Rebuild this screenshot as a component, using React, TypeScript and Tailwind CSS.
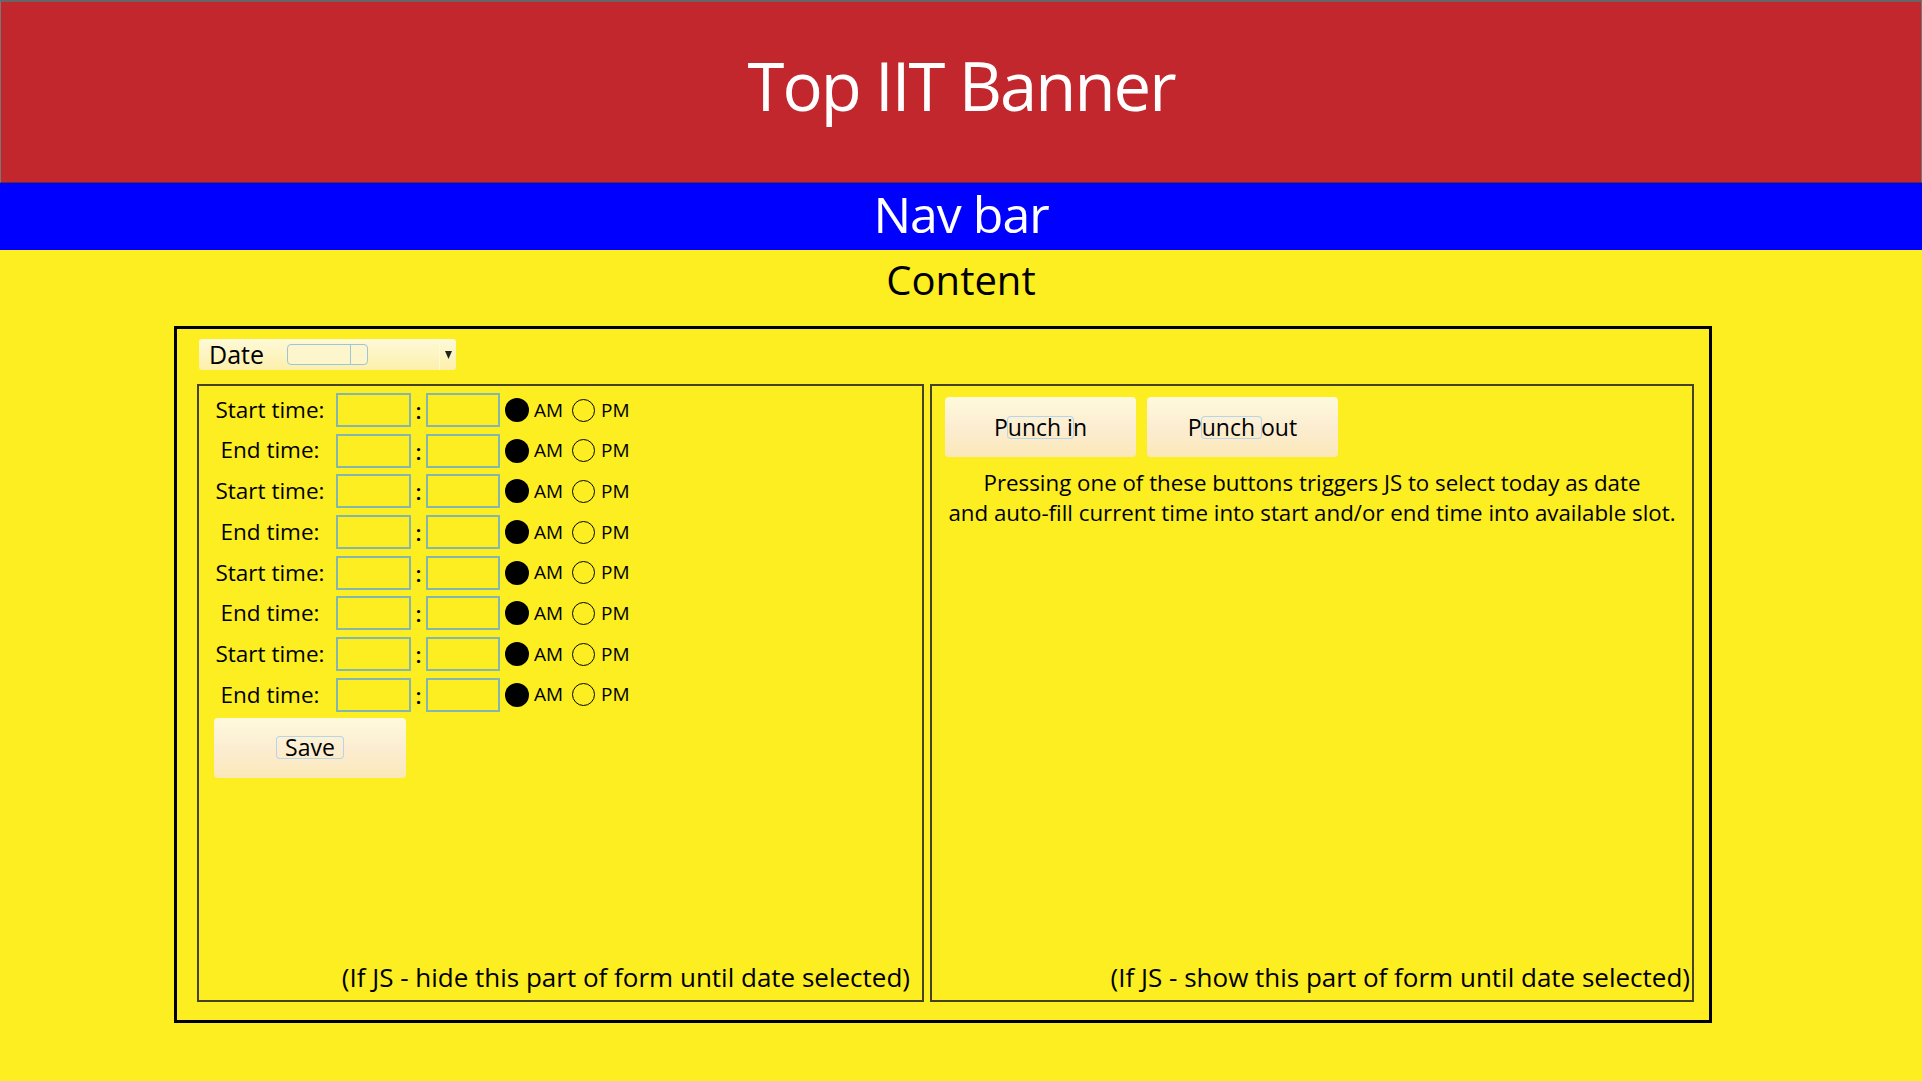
import React from 'react';

const rows = ['Start time:', 'End time:', 'Start time:', 'End time:', 'Start time:', 'End time:', 'Start time:', 'End time:'];

function TimeRow({ label }: { label: string }) {
  return (
    <div className="flex h-[34px] items-center pl-[12px]">
      <span className="w-[118px] text-center text-[22.5px] leading-none">{label}</span>
      <div className="ml-[7px] h-[34px] w-[75px] border-2 border-[#84b6b0]" />
      <span className="w-[15px] text-center text-[22px] font-semibold leading-none">:</span>
      <div className="h-[34px] w-[74px] border-2 border-[#84b6b0]" />
      <span className="ml-[5px] h-[24px] w-[24px] rounded-full bg-black" />
      <span className="ml-[5px] text-[19px] leading-none">AM</span>
      <span className="ml-[9px] h-[23px] w-[23px] rounded-full border-[1.5px] border-black" />
      <span className="ml-[6px] text-[19px] leading-none">PM</span>
    </div>
  );
}

function CreamButton({ children, className }: { children: React.ReactNode; className?: string }) {
  return (
    <div
      className={
        'flex h-[60px] w-[191px] items-center justify-center rounded-[4px] bg-linear-to-b from-[#fefadb] via-[#fcedd2] to-[#fbe8b8] text-[23px] ' +
        (className ?? '')
      }
    >
      {children}
    </div>
  );
}

function Focus({ children }: { children: React.ReactNode }) {
  return <span className="inline-block rounded-[3px] leading-[21px] ring-1 ring-[#b7d5e8]">{children}</span>;
}

export default function App() {
  return (
    <div className="min-h-screen w-full bg-[#fcee21] font-['Open_Sans',sans-serif] text-black">
      {/* Banner */}
      <div className="flex h-[183px] justify-center border-t-2 border-r border-l border-b border-t-[#666] border-r-[#777] border-l-[#777] border-b-[#5c2a3a] bg-[#c1272d] pt-[50px]">
        <h1 className="text-[67px] leading-none tracking-[-2px] text-white">Top IIT Banner</h1>
      </div>

      {/* Nav */}
      <div className="flex h-[67px] justify-center bg-[#0000ff] pt-[6px]">
        <span className="text-[50px] leading-none tracking-[-1px] text-white">Nav bar</span>
      </div>

      {/* Content */}
      <div className="flex flex-col pt-[10px]">
        <h2 className="text-center text-[40px] leading-none">Content</h2>

        <div className="mt-[26px] ml-[174px] flex h-[697px] w-[1538px] flex-col border-[3px] border-black pt-[10px] pb-[18px] pl-[20px]">
          {/* Date select */}
          <div className="ml-[2px] flex h-[31px] w-[257px] items-center rounded-[3px] bg-linear-to-b from-[#fef9d8] to-[#fcf0aa]">
            <span className="ml-[10px] w-[78px] text-[25px] leading-none">Date</span>
            <div className="flex h-[21px] w-[81px] rounded-[4px] border border-[#9cc5dc] bg-[#fdf5cc]">
              <div className="w-[63px] border-r border-[#9cc5dc]" />
            </div>
            <div className="ml-auto flex h-full w-[17px] items-center justify-center border-l border-[#fff9d6]">
              <svg width="7" height="8" viewBox="0 0 7 8">
                <path d="M0 0H7L3.5 8Z" fill="#222" />
              </svg>
            </div>
          </div>

          <div className="mt-[14px] flex flex-1 gap-[6px]">
            {/* Left panel */}
            <div className="flex w-[727px] flex-col border-2 border-[#46422a] pt-[7px] pb-[10px]">
              <div className="flex flex-col gap-[6.7px]">
                {rows.map((r, i) => (
                  <TimeRow key={i} label={r} />
                ))}
              </div>
              <CreamButton className="mt-[6px] ml-[15px] w-[192px]">
                <Focus>
                  <span className="px-[8px]">Save</span>
                </Focus>
              </CreamButton>
              <p className="mt-auto pr-[12px] text-right text-[26px] leading-none">
                (If JS - hide this part of form until date selected)
              </p>
            </div>

            {/* Right panel */}
            <div className="flex w-[764px] flex-col border-2 border-[#46422a] pt-[11px] pb-[10px]">
              <div className="flex gap-[11px] pl-[13px]">
                <CreamButton>
                  <span>
                    P<Focus>unch i</Focus>n
                  </span>
                </CreamButton>
                <CreamButton>
                  <span>
                    P<Focus>unch&nbsp;</Focus>out
                  </span>
                </CreamButton>
              </div>
              <p className="mt-[11px] text-center text-[22.3px] leading-[30px]">
                Pressing one of these buttons triggers JS to select today as date
                <br />
                and auto-fill current time into start and/or end time into available slot.
              </p>
              <p className="mt-auto pr-[2px] text-right text-[26px] leading-none">
                (If JS - show this part of form until date selected)
              </p>
            </div>
          </div>
        </div>
      </div>
    </div>
  );
}
